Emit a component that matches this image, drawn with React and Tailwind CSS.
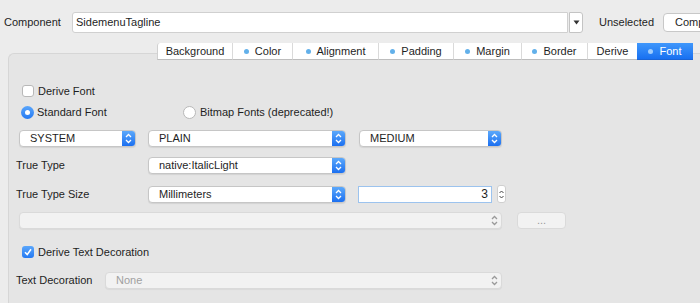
import React from 'react';

function UpDown({ color = '#fff', className = '' }) {
  return (
    <svg width="9" height="13" viewBox="0 0 9 13" className={className}>
      <path d="M2 5 L4.5 2.5 L7 5" fill="none" stroke={color} strokeWidth="1.3" />
      <path d="M2 8 L4.5 10.5 L7 8" fill="none" stroke={color} strokeWidth="1.3" />
    </svg>
  );
}

function Combo({ value, width }) {
  return (
    <div
      className={`${width} h-[17px] flex bg-white border border-[#c6c6c6] rounded-[4px] shadow-[0_1px_1px_rgba(0,0,0,0.08)] overflow-hidden`}
    >
      <div className="flex-1 flex items-center pl-[10px] text-[#1e1e1e]">{value}</div>
      <div className="w-[13px] h-full flex items-center justify-center bg-linear-to-b from-[#5ba8fb] to-[#1b6ff0]">
        <UpDown />
      </div>
    </div>
  );
}

function DisabledCombo({ value, width }) {
  return (
    <div
      className={`${width} h-[17px] flex items-center bg-[#f2f2f2] border border-[#dadada] rounded-[4px] shadow-[0_1px_1px_rgba(0,0,0,0.05)]`}
    >
      <div className="flex-1 pl-[10px] text-[#a0a0a0]">{value}</div>
      <UpDown color="#9a9a9a" className="mr-[2px]" />
    </div>
  );
}

function Checkbox({ checked }) {
  if (checked) {
    return (
      <div className="w-[12px] h-[12px] rounded-[3px] bg-linear-to-b from-[#5aa6fb] to-[#2479f2] flex items-center justify-center">
        <svg width="10" height="10" viewBox="0 0 10 10">
          <path d="M2 5.2 L4.2 7.6 L8 2.2" fill="none" stroke="#fff" strokeWidth="1.6" />
        </svg>
      </div>
    );
  }
  return <div className="w-[12px] h-[12px] rounded-[3px] bg-white border border-[#b8b8b8]" />;
}

function Radio({ checked }) {
  if (checked) {
    return (
      <div className="w-[13px] h-[13px] rounded-full bg-linear-to-b from-[#5aa6fb] to-[#2479f2] flex items-center justify-center">
        <div className="w-[5px] h-[5px] rounded-full bg-white" />
      </div>
    );
  }
  return <div className="w-[13px] h-[13px] rounded-full bg-white border border-[#b8b8b8]" />;
}

const tabs = [
  { label: 'Background', w: 'w-[75px]', dot: false },
  { label: 'Color', w: 'w-[60px]', dot: true },
  { label: 'Alignment', w: 'w-[86px]', dot: true },
  { label: 'Padding', w: 'w-[75px]', dot: true },
  { label: 'Margin', w: 'w-[68px]', dot: true },
  { label: 'Border', w: 'w-[66px]', dot: true },
  { label: 'Derive', w: 'w-[50px]', dot: false },
  { label: 'Font', w: 'w-[56px]', dot: true, active: true },
];

export default function App() {
  return (
    <div className="w-[700px] h-[303px] overflow-hidden bg-[#ececec] text-[11px] text-[#1e1e1e] font-['Liberation_Sans',Arial,sans-serif]">
      {/* top row */}
      <div className="flex items-center h-[21px] mt-[12px] whitespace-nowrap">
        <span className="shrink-0 ml-[4px] w-[68px]">Component</span>
        <div className="shrink-0 w-[496px] h-[21px] flex items-center pl-[3px] bg-white border border-[#d0d0d0] rounded-l-[3px]">
          SidemenuTagline
        </div>
        <div className="shrink-0 ml-[1px] w-[14px] h-[21px] flex items-center justify-center bg-white border border-[#c4c4c4] rounded-r-[3px]">
          <svg width="7" height="5" viewBox="0 0 7 5">
            <path d="M0.5 0.5 L6.5 0.5 L3.5 4.5 Z" fill="#333" />
          </svg>
        </div>
        <span className="shrink-0 ml-[16px]">Unselected</span>
        <div className="shrink-0 ml-[9px] h-[19px] w-[80px] flex items-center pl-[11px] bg-white border border-[#c8c8c8] rounded-[4px]">
          Component
        </div>
      </div>

      {/* tabs */}
      <div className="relative z-10 flex ml-[157px] mt-[10px] h-[17px] whitespace-nowrap">
        {tabs.map((t, i) => (
          <div
            key={t.label}
            className={`shrink-0 ${t.w} h-full flex items-center justify-center gap-[6px] border-b ${
              t.active
                ? 'bg-linear-to-b from-[#3f97fb] to-[#1870f1] text-white border-[#1a64d6]'
                : 'bg-white border-[#bdbdbd]'
            } ${i > 0 && !t.active ? 'border-l border-l-[#dadada]' : ''} ${i === 0 ? 'rounded-tl-[3px] border-l border-l-[#d0d0d0]' : ''}`}
          >
            {t.dot && (
              <span
                className={`w-[5px] h-[5px] rounded-full ${t.active ? 'bg-[#9fcdfd]' : 'bg-[#62b0ea]'}`}
              />
            )}
            <span>{t.label}</span>
          </div>
        ))}
      </div>

      {/* panel */}
      <div className="ml-[8px] mt-[-7px] h-[260px] bg-[#e5e5e5] border-t border-l border-[#d6d6d6] rounded-tl-[6px] whitespace-nowrap">
        <div className="flex items-center h-[12px] mt-[31px]">
          <div className="ml-[13px]">
            <Checkbox />
          </div>
          <span className="ml-[4px]">Derive Font</span>
        </div>

        <div className="flex items-center h-[13px] mt-[9px]">
          <div className="ml-[12px] w-[162px] flex items-center">
            <Radio checked />
            <span className="ml-[3px]">Standard Font</span>
          </div>
          <Radio />
          <span className="ml-[4px]">Bitmap Fonts (deprecated!)</span>
        </div>

        <div className="flex items-center h-[17px] mt-[11px]">
          <div className="ml-[10px]">
            <Combo value="SYSTEM" width="w-[117px]" />
          </div>
          <div className="ml-[12px]">
            <Combo value="PLAIN" width="w-[198px]" />
          </div>
          <div className="ml-[13px]">
            <Combo value="MEDIUM" width="w-[143px]" />
          </div>
        </div>

        <div className="flex items-center h-[17px] mt-[10px]">
          <span className="ml-[7px] w-[132px]">True Type</span>
          <Combo value="native:ItalicLight" width="w-[198px]" />
        </div>

        <div className="flex items-center h-[18px] mt-[11px]">
          <span className="ml-[7px] w-[132px]">True Type Size</span>
          <Combo value="Millimeters" width="w-[198px]" />
          <div className="ml-[12px] w-[134px] h-[17px] flex items-center justify-end pr-[3px] bg-white border border-[#9cc3ee] text-[12px]">
            3
          </div>
          <div className="ml-[5px] w-[9px] h-[18px] flex items-center justify-center bg-white border border-[#cfcfcf] rounded-[3px]">
            <svg width="7" height="13" viewBox="0 0 7 13">
              <path d="M1.5 5 L3.5 3 L5.5 5" fill="none" stroke="#444" strokeWidth="1" />
              <path d="M1.5 8 L3.5 10 L5.5 8" fill="none" stroke="#444" strokeWidth="1" />
            </svg>
          </div>
        </div>

        <div className="flex items-center h-[17px] mt-[9px]">
          <div className="ml-[10px]">
            <DisabledCombo value="" width="w-[483px]" />
          </div>
          <div className="ml-[15px] w-[49px] h-[17px] flex items-center justify-center bg-[#f2f2f2] border border-[#dadada] rounded-[4px] text-[#9a9a9a]">
            ...
          </div>
        </div>

        <div className="flex items-center h-[12px] mt-[17px]">
          <div className="ml-[13px]">
            <Checkbox checked />
          </div>
          <span className="ml-[4px]">Derive Text Decoration</span>
        </div>

        <div className="flex items-center h-[17px] mt-[14px]">
          <span className="ml-[7px] w-[89px]">Text Decoration</span>
          <DisabledCombo value="None" width="w-[397px]" />
        </div>
      </div>
    </div>
  );
}
